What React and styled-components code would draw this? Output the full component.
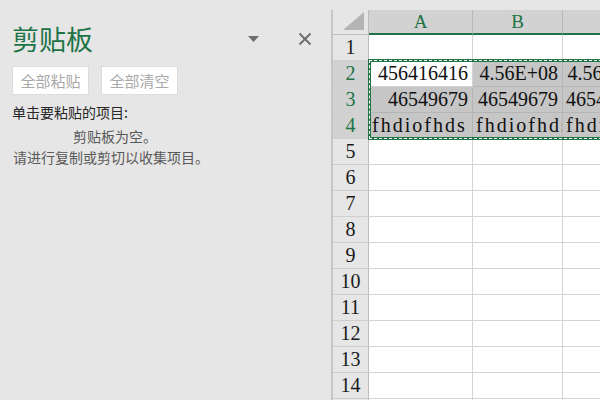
import styled, { createGlobalStyle } from "styled-components"

const GlobalStyle = createGlobalStyle`
    html, body {
        margin: 0;
        padding: 0;
        width: 600px;
        height: 400px;
        overflow: hidden;
        background: #e6e6e6;
    }
    * { box-sizing: border-box; }
`

const GREEN = "#217346"

const Page = styled.div`
    display: flex;
    width: 600px;
    height: 400px;
    font-family: "Noto Sans CJK SC", "Noto Sans", sans-serif;
`

// ---------- clipboard pane ----------
const Pane = styled.div`
    width: 331px;
    flex-shrink: 0;
    background: #e6e6e6;
    padding: 0 12px;
`
const PaneHeader = styled.div`
    display: flex;
    align-items: center;
    height: 30px;
    margin-top: 24px;
`
const Title = styled.h1`
    margin: 0;
    flex: 1;
    font-size: 27px;
    font-weight: 400;
    line-height: 30px;
    color: ${GREEN};
`
const IconButton = styled.span`
    display: flex;
    align-items: center;
    justify-content: center;
    width: 16px;
    height: 16px;
    margin-left: ${p => p.$gap}px;
    margin-right: ${p => p.$right || 0}px;
`
const Buttons = styled.div`
    display: flex;
    gap: 12px;
    margin-top: 12px;
`
const Button = styled.button`
    width: 77px;
    height: 29px;
    padding: 0;
    border: 1px solid #dcdcdc;
    background: #fff;
    color: #a8a8a8;
    font-family: inherit;
    font-size: 15px;
`
const Label = styled.p`
    margin: 7px 0 0;
    font-size: 14px;
    line-height: 20px;
    color: #262626;
`
const Empty = styled.p`
    margin: 4px 0 0 1px;
    font-size: 14px;
    line-height: 21px;
    color: #595959;
`
const Centered = styled.span`
    display: block;
    padding-left: 60px;
`

// ---------- sheet ----------
const Sheet = styled.div`
    flex: 1;
    display: flex;
    flex-direction: column;
    overflow: hidden;
`
const TopStrip = styled.div`
    height: 10px;
    flex-shrink: 0;
    background: #e6e6e6;
`
const Grid = styled.div`
    position: relative;
    display: grid;
    grid-template-columns: 36px 104px 90px 88px 80px;
    grid-template-rows: 25px repeat(15, 26px);
    border-left: 2px solid #c6c6c6;
    background: #fff;
    font-family: "Liberation Serif", "Noto Sans CJK SC", serif;
`
const Corner = styled.div`
    position: relative;
    background: #e6e6e6;
    border-right: 1px solid #bcbcbc;
    border-bottom: 1px solid #bcbcbc;
    &::after {
        content: "";
        position: absolute;
        right: 4px;
        bottom: 4px;
        width: 0;
        height: 0;
        border-left: 21px solid transparent;
        border-bottom: 18px solid #b4b4b4;
    }
`
const ColHead = styled.div`
    display: flex;
    align-items: center;
    justify-content: center;
    background: #d2d2d2;
    border-right: 1px solid #b8b8b8;
    border-bottom: 2px solid ${GREEN};
    color: ${GREEN};
    font-size: 19px;
    padding-top: 1px;
`
const RowHead = styled.div`
    display: flex;
    align-items: center;
    justify-content: center;
    background: ${p => (p.$sel ? "#d2d2d2" : "#e6e6e6")};
    color: ${p => (p.$sel ? GREEN : "#1a1a1a")};
    border-right: 1px solid #bdbdbd;
    border-bottom: 1px solid #cfcfcf;
    font-size: 20px;
`
const Cell = styled.div`
    display: flex;
    align-items: center;
    justify-content: ${p => (p.$num ? "flex-end" : "flex-start")};
    padding: 0 4px 0 3px;
    overflow: hidden;
    white-space: nowrap;
    background: ${p => (p.$sel ? "#c6c6c6" : "#fff")};
    border-right: 1px solid ${p => (p.$sel ? "#b5b5b5" : "#d4d4d4")};
    border-bottom: 1px solid ${p => (p.$sel ? "#b5b5b5" : "#d4d4d4")};
    color: #111;
    font-size: 20px;
    letter-spacing: ${p => (p.$text ? "2px" : "0")};
`
const Marquee = styled.div`
    position: absolute;
    left: 35px;
    top: 49px;
    width: 300px;
    height: 81px;
    border: 3px solid ${GREEN};
    pointer-events: none;
    &::after {
        content: "";
        position: absolute;
        inset: -2px;
        border: 1px dashed #fff;
    }
`

const columns = ["A", "B", "C", "D"]
const data = {
    2: [["456416416", true], ["4.56E+08", true], ["4.56E+08", true]],
    3: [["46549679", true], ["46549679", true], ["46549679", true]],
    4: [["fhdiofhds", false], ["fhdiofhds", false], ["fhdiofhds", false]],
}

const App = () => {
    const rows = Array.from({ length: 15 }, (_, i) => i + 1)
    return (
        <>
            <GlobalStyle />
            <Page>
                <Pane>
                    <PaneHeader>
                        <Title>剪贴板</Title>
                        <IconButton $gap={0}>
                            <svg width="11" height="6" viewBox="0 0 11 6">
                                <path d="M0 0h11L5.5 6z" fill="#6e6e6e" />
                            </svg>
                        </IconButton>
                        <IconButton $gap={36} $right={6}>
                            <svg width="14" height="14" viewBox="0 0 14 14">
                                <path d="M1.5 1.5l11 11M12.5 1.5l-11 11" stroke="#6e6e6e" strokeWidth="2" />
                            </svg>
                        </IconButton>
                    </PaneHeader>
                    <Buttons>
                        <Button disabled>全部粘贴</Button>
                        <Button disabled>全部清空</Button>
                    </Buttons>
                    <Label>单击要粘贴的项目:</Label>
                    <Empty>
                        <Centered>剪贴板为空。</Centered>
                        请进行复制或剪切以收集项目。
                    </Empty>
                </Pane>
                <Sheet>
                    <TopStrip />
                    <Grid>
                        <Corner />
                        {columns.map(c => <ColHead key={c}>{c}</ColHead>)}
                        {rows.map(r => {
                            const sel = r >= 2 && r <= 4
                            return [
                                <RowHead key={"h" + r} $sel={sel}>{r}</RowHead>,
                                ...columns.map((c, ci) => {
                                    const v = data[r] && data[r][ci]
                                    return (
                                        <Cell
                                            key={c + r}
                                            $sel={sel && ci < 3 && !(r === 2 && ci === 0) || (sel && ci === 3)}
                                            $num={v && v[1]}
                                            $text={v && !v[1]}
                                        >
                                            {v ? v[0] : ""}
                                        </Cell>
                                    )
                                }),
                            ]
                        })}
                        <Marquee />
                    </Grid>
                </Sheet>
            </Page>
        </>
    )
}

export default App
